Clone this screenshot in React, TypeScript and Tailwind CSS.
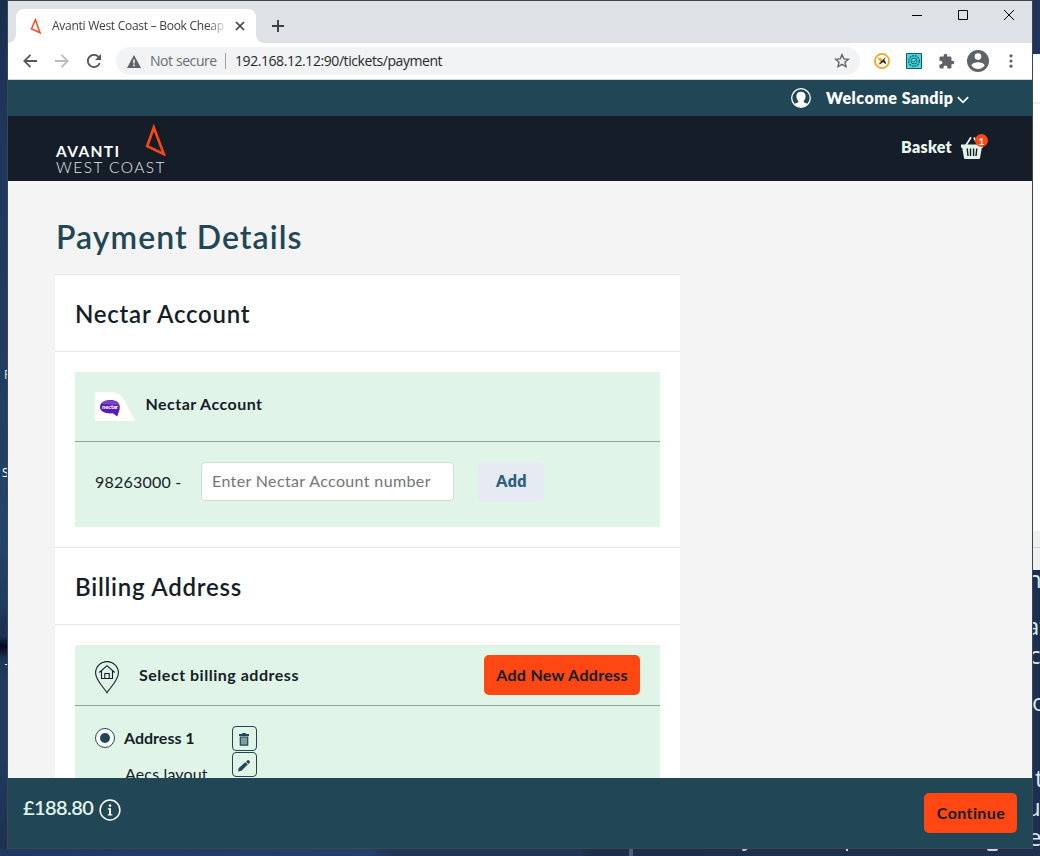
import React from "react";

const ui = "font-['Open_Sans','Noto_Sans',sans-serif]";

function TabStrip() {
  return (
    <div className="flex h-[42px] shrink-0 bg-[#dee1e6]">
      <svg className="h-2 w-2 shrink-0 self-end" viewBox="0 0 8 8"><path d="M8 0v8H0a8 8 0 0 0 8-8z" fill="#fff" /></svg>
      <div className="mt-2 flex h-[34px] w-60 shrink-0 items-center rounded-t-lg bg-white">
        <svg className="ml-[14px] h-4 w-[13px] shrink-0" viewBox="0 0 13 16" fill="none" stroke="#f9502c" strokeWidth="1.6">
          <path d="M5.4 1.8 1.5 10.8 10 14.8z" />
        </svg>
        <span className="ml-[9px] w-[174px] overflow-hidden whitespace-nowrap text-xs tracking-[-0.27px] text-[#3c4043] [mask-image:linear-gradient(to_right,#000_155px,transparent_176px)]">
          Avanti West Coast – Book Cheap
        </span>
        <svg className="ml-[9px] h-[10px] w-[10px]" viewBox="0 0 10 10" stroke="#3c4043" strokeWidth="1.7"><path d="M1 1l8 8M9 1l-8 8" /></svg>
      </div>
      <svg className="h-2 w-2 shrink-0 self-end" viewBox="0 0 8 8"><path d="M0 0v8h8a8 8 0 0 1-8-8z" fill="#fff" /></svg>
      <svg className="ml-2 mt-[19px] h-3 w-3" viewBox="0 0 12 12" stroke="#3c4043" strokeWidth="1.9"><path d="M6 0v12M0 6h12" /></svg>
      <div className="ml-auto mr-[18px] mt-[9px] flex h-[11px] gap-9">
        <svg className="h-[11px] w-[10px]" viewBox="0 0 10 11" stroke="#000"><path d="M0 5.5h10" /></svg>
        <svg className="h-[10px] w-[10px]" viewBox="0 0 10 10" fill="none" stroke="#000"><path d="M.5.5h9v9h-9z" /></svg>
        <svg className="h-[10px] w-[10px]" viewBox="0 0 10 10" stroke="#000"><path d="M0 0l10 10M10 0L0 10" /></svg>
      </div>
    </div>
  );
}

function Slot({ children }: { children: React.ReactNode }) {
  return <div className="flex h-8 w-8 shrink-0 items-center justify-center">{children}</div>;
}

function Toolbar() {
  return (
    <div className="flex h-[37px] shrink-0 items-center border-b border-[#d3d6d9] bg-white pl-1.5">
      <Slot>
        <svg className="h-[14px] w-[14px]" viewBox="0 0 14 14" fill="none" stroke="#54585d" strokeWidth="1.8"><path d="M14 7H1.5M7.5.8 1.3 7l6.2 6.2" /></svg>
      </Slot>
      <Slot>
        <svg className="h-[14px] w-[14px]" viewBox="0 0 14 14" fill="none" stroke="#babcbe" strokeWidth="1.8"><path d="M0 7h12.5M6.5.8 12.7 7l-6.2 6.2" /></svg>
      </Slot>
      <Slot>
        <svg className="h-[14px] w-[14px]" viewBox="0 0 14 14" fill="none" stroke="#54585d" strokeWidth="1.9"><path d="M12.7 9A6.1 6.1 0 1 1 11.6 3" /><path d="M14 0v6H8z" fill="#54585d" stroke="none" /></svg>
      </Slot>
      <div className="ml-1.5 flex h-7 w-[744px] items-center rounded-full bg-[#f1f3f4] pl-[11px] pr-[10px] text-sm">
        <svg className="h-[13px] w-[14px]" viewBox="0 0 14 13"><path d="M7 0l7 13H0z" fill="#5f6368" /><path d="M6.2 4.5h1.6v4H6.2zM6.2 9.6h1.6v1.6H6.2z" fill="#f1f3f4" /></svg>
        <span className="ml-[9px] w-[67px] whitespace-nowrap tracking-[-0.42px] text-[#6a6e73]">Not secure</span>
        <span className="ml-2 h-4 w-px bg-[#9aa0a6]" />
        <span className="ml-[9px] whitespace-nowrap tracking-[-0.43px] text-[#27292d]">192.168.12.12:90/tickets/payment</span>
        <svg className="ml-auto h-4 w-4" viewBox="0 0 24 24" fill="none" stroke="#5f6368" strokeWidth="2"><path d="M12 2.5l2.7 6.3 6.9.6-5.2 4.5 1.6 6.7-6-3.6-6 3.6 1.6-6.7-5.2-4.5 6.9-.6z" /></svg>
      </div>
      <div className="ml-1.5 flex">
        <Slot>
          <svg className="h-4 w-4" viewBox="0 0 16 16"><circle cx="8" cy="8" r="7.1" fill="#fff" stroke="#f9a21b" strokeWidth="1.7" /><path d="M3.5 5h3.5L8.5 7l2.5-2-5.5 6.5-1.5-.3 2.3-2.7z" fill="#f7a11c" /><path d="M12 4 7.500 8 5.200 11.300l2.100-.8L9 9l3 2.600-.4-2.600L10.300 7z" fill="#222" /></svg>
        </Slot>
        <Slot>
          <svg className="h-4 w-4" viewBox="0 0 16 16" fill="none"><path d="M.5.5h15v15H.5z" fill="#45d9e3" stroke="#1c5661" /><circle cx="8" cy="8" r="5.3" stroke="#1b6672" strokeWidth="1.4" strokeDasharray="2 .8" /><circle cx="8" cy="8" r="3" stroke="#1b6672" /><path d="M6.3 8.2l1.2 1.1 2.3-2.5" stroke="#1b6672" /></svg>
        </Slot>
        <Slot>
          <svg className="h-[17px] w-[17px]" viewBox="0 0 24 24" fill="#5f6368"><path d="M20.5 11H19V7c0-1.1-.9-2-2-2h-4V3.5a2.5 2.5 0 0 0-5 0V5H4c-1.1 0-2 .9-2 2v3.8h1.5c1.5 0 2.7 1.2 2.7 2.7S5 16.2 3.5 16.2H2V20c0 1.1.9 2 2 2h3.8v-1.5c0-1.5 1.2-2.7 2.7-2.7s2.7 1.2 2.7 2.7V22H17c1.1 0 2-.9 2-2v-4h1.5a2.5 2.5 0 0 0 0-5z" /></svg>
        </Slot>
        <Slot>
          <svg className="h-[22px] w-[22px]" viewBox="0 0 22 22"><circle cx="11" cy="11" r="11" fill="#5f6368" /><circle cx="11" cy="6.6" r="3.3" fill="#fff" /><path d="M4.4 15.6c0-2.2 4.4-3.4 6.6-3.4s6.6 1.2 6.6 3.4A8 8 0 0 1 11 19a8 8 0 0 1-6.6-3.4z" fill="#fff" /></svg>
        </Slot>
        <Slot>
          <svg className="ml-px h-[14px] w-1" viewBox="0 0 4 14" fill="#5f6368"><circle cx="2" cy="1.8" r="1.6" /><circle cx="2" cy="7" r="1.6" /><circle cx="2" cy="12.2" r="1.6" /></svg>
        </Slot>
      </div>
    </div>
  );
}

function SiteHeader() {
  return (
    <>
      <div className="flex h-9 shrink-0 items-center justify-end bg-[#214655] pr-[63px] text-white">
        <svg className="h-5 w-5" viewBox="0 0 20 20"><circle cx="10" cy="10" r="9.3" fill="none" stroke="#fff" strokeWidth="1.3" /><path d="M10 3.7c-3 0-4.700 2-4.600 4.600 0 1.900.7 3.500 1.900 4.600.3 1.200-.4 1.700-3.700 2.900C5.400 17.900 7.500 19 10 19s4.600-1.100 6.400-3.200c-3.300-1.200-4-1.700-3.700-2.900 1.200-1.100 1.900-2.700 1.900-4.600 0-2.600-1.600-4.600-4.600-4.600z" fill="#fff" /></svg>
        <span className="ml-[15px] w-[129px] whitespace-nowrap text-base font-extrabold tracking-[0.5px]">Welcome Sandip</span>
        <svg className="ml-[2px] mt-1 h-2 w-3" viewBox="0 0 12 8" fill="none" stroke="#fff" strokeWidth="1.7"><path d="M.8 1.2 6 6.4l5.2-5.2" /></svg>
      </div>
      <div className="flex h-[65px] shrink-0 justify-between bg-[#151e28] pl-12 pr-12">
        <div className="pt-2">
          <div className="flex h-8 items-end">
            <span className="mb-[-5px] w-[89px] text-[15.5px] font-bold leading-5 tracking-[1.35px] text-white">AVANTI</span>
            <svg className="h-8 w-[22px]" viewBox="0 0 22 32" fill="none" stroke="#ff4713" strokeWidth="2.6"><path d="M8.8 3.5 2.2 22.2l16.600 7.900z" /></svg>
          </div>
          <div className="mt-px whitespace-nowrap text-[15.5px] font-light leading-5 tracking-[1.45px] text-[#e4e7ea]">WEST COAST</div>
        </div>
        <div className="flex pt-[19px]">
          <span className="w-[59px] whitespace-nowrap text-base font-extrabold leading-6 tracking-[0.3px] text-[#e8f7ee]">Basket</span>
          <div className="relative h-6 w-6">
            <svg className="mt-px h-[23px] w-6" viewBox="0 0 24 23"><path d="M1 8.5h22v3.3h-1.2L20 22c-.1.6-.5 1-1.2 1H5.2c-.7 0-1.1-.4-1.2-1L2.2 11.8H1z" fill="#e1f4e8" /><path d="M7.2 12.5l.8 7.5M10.5 12.5V20M13.6 12.5V20M16.8 12.5l-.8 7.5" stroke="#151e28" strokeWidth="1.4" /><path d="M5.8 9.5 11 1.2M14 1.5l2 4" stroke="#e1f4e8" strokeWidth="1.7" fill="none" /></svg>
            <span className="absolute left-[15px] top-[-1px] flex h-[13px] w-[13px] items-center justify-center rounded-full bg-[#ff4713] text-[10px] font-bold leading-none text-white">1</span>
          </div>
        </div>
      </div>
    </>
  );
}

function CardHeading({ children }: { children: React.ReactNode }) {
  return (
    <h2 className="flex h-[78px] items-center border-y border-[#e4e5e6] pl-5 pt-px text-2xl font-semibold tracking-[0.76px] text-[#151e28]">
      {children}
    </h2>
  );
}

function NectarPanel() {
  return (
    <div className="m-5 h-[155px] bg-[#e1f4e8]">
      <div className="flex h-[70px] items-start border-b border-[#8aa69e] px-5 pt-5">
        <div className="relative h-[29px] w-10">
          <svg className="h-[29px] w-10" viewBox="0 0 40 29"><path d="M0 0h15c8 0 12 4 15.5 10.5L40 29H0z" fill="#fff" /><path d="M15 8c6 0 9.800 2.600 9.800 7 0 3.500-1.500 5.500-2.500 9.500l-4.500-3.200c-7 .6-12.800-1.600-12.800-6C5 11 9 8 15 8z" fill="#5c1ab2" /><path d="M6 12c2-3 6-3.600 9-3.600S23 9.500 24.300 13z" fill="#8c62ca" opacity=".6" /></svg>
          <span className="absolute left-[7px] top-[11px] text-[6px] font-black leading-[7px] tracking-[-0.2px] text-white">nectar</span>
        </div>
        <span className="ml-[10.5px] text-base font-bold leading-6 tracking-[0.46px] text-[#151e28]">Nectar Account</span>
      </div>
      <div className="flex px-5 pt-5">
        <span className="w-[106px] text-base leading-10 tracking-[0.22px] text-[#151e28]">98263000 -</span>
        <input
          className="h-[39px] w-[253px] rounded border border-[#d3dae4] bg-white px-[10px] pb-0.5 text-base tracking-[0.37px] text-[#151e28] placeholder:text-[#757575]"
          placeholder="Enter Nectar Account number"
        />
        <button className="ml-6 h-10 w-[66px] rounded-[5px] bg-[#e5eaf3] pb-0.5 pl-px text-base font-extrabold tracking-[0.4px] text-[#2d5f7d]">Add</button>
      </div>
    </div>
  );
}

function BillingPanel() {
  return (
    <div className="m-5 h-[200px] bg-[#e1f4e8]">
      <div className="flex h-[61px] items-center border-b border-[#8aa69e] px-5">
        <svg className="mt-1 h-[33px] w-6" viewBox="0 0 24 33" fill="none" stroke="#151e28" strokeWidth="1.1"><path d="M12 31.7C8 25.5.6 19 .6 12a11.4 11.4 0 0 1 22.8 0c0 7-7.4 13.5-11.4 19.7z" /><path d="M4.3 11.5 12 4.7l7.7 6.8M6.5 10v7.5h11V10M9.8 17.5v-5h4.4v5" /></svg>
        <span className="ml-5 text-base font-bold tracking-[0.52px] text-[#151e28]">Select billing address</span>
        <button className="ml-auto h-10 w-[156px] rounded-[5px] bg-[#ff4713] text-base font-bold tracking-[0.32px] text-[#151e28]">Add New Address</button>
      </div>
      <div className="flex px-5 pt-5">
        <div className="mt-0.5 flex h-5 w-5 items-center justify-center rounded-full border border-[#214655] bg-white">
          <span className="h-[10px] w-[10px] rounded-full bg-[#214655]" />
        </div>
        <div className="ml-[9px] w-[108px] text-[#151e28]">
          <div className="text-base font-bold leading-6">Address 1</div>
          <div className="mt-3 pl-px text-base leading-6 tracking-[0.15px]">Aecs layout</div>
        </div>
        <div className="flex flex-col gap-px">
          <button className="flex h-[25px] w-[25px] items-center justify-center rounded border border-[#214655]">
            <svg className="mr-px mt-px h-[13px] w-[10px]" viewBox="0 0 10 13"><path d="M0 1h3l.6-1h2.8L7 1h3v2H0z" fill="#214655" /><path d="M1.3 4h7.4v8.2H1.3z" fill="#7f9c9e" stroke="#214655" strokeWidth="1.2" /></svg>
          </button>
          <button className="flex h-[25px] w-[25px] items-center justify-center rounded border border-[#214655]">
            <svg className="mr-px mt-0.5 h-3 w-3" viewBox="0 0 12 12" fill="#214655"><path d="M0 11.5l.8-3.5 6.5-5.8 2.500 2.400-6.400 6.100zM8 1.700 9.400.4c.5-.5 1.100-.5 1.500 0l.8.9c.4.4.4 1-.1 1.400l-1.300 1.300z" /></svg>
          </button>
        </div>
      </div>
    </div>
  );
}

function ActionBar() {
  return (
    <div className="flex h-[70px] shrink-0 items-start bg-[#214655] pl-[15px] pr-[15px] pt-[15px]">
      <span className="w-[72px] whitespace-nowrap text-xl font-semibold leading-7 tracking-[-0.6px] text-[#e1f4e8]">£188.80</span>
      <svg className="ml-[3.5px] mt-[6px] h-[22px] w-[22px]" viewBox="0 0 22 22"><circle cx="11" cy="11" r="9.9" fill="none" stroke="#fff" strokeWidth="1.5" /><circle cx="11" cy="6.6" r="1.3" fill="#fff" /><path d="M8.8 9.2h3.2v6h1.3v1.3H8.800v-1.300h1.300v-4.700H8.800z" fill="#fff" /></svg>
      <button className="ml-auto h-10 w-[93px] rounded-[5px] bg-[#ff4713] pl-px text-base font-bold tracking-[0.4px] text-[#151e28]">Continue</button>
    </div>
  );
}

function RightDesktop() {
  return (
    <div className={`flex w-[7px] flex-col overflow-hidden bg-[#1b3050] text-2xl leading-6 text-[#dce8f3] ${ui}`}>
      <div className="h-[54px] shrink-0 bg-[#20355d]" />
      <div className="h-[50px] shrink-0 border-b-2 border-[#ededed] bg-white" />
      <div className="h-[427px] shrink-0 bg-white" />
      <div className="h-[17px] shrink-0 border-b border-[#cfcfcf] bg-[#f0f0f0]" />
      <div className="h-[22px] shrink-0 bg-[#f0f0f0]" />
      <div className="-ml-[6px] flex h-[18px] shrink-0 items-center">n</div>
      <div className="-ml-[7px] mt-[26px] flex h-6 shrink-0 items-center">at</div>
      <div className="-ml-[4px] mt-[5px] flex h-6 shrink-0 items-center">c</div>
      <div className="-ml-[1px] mt-[23px] flex h-6 shrink-0 items-center">o</div>
      <div className="ml-[2px] mt-[52px] flex h-6 shrink-0 items-center">t</div>
      <div className="-ml-[7px] mt-[5px] flex h-6 shrink-0 items-center">u</div>
      <div className="-ml-[5px] mt-[6px] flex h-6 shrink-0 items-center">e</div>
    </div>
  );
}

export default function App() {
  return (
    <div className="flex h-[856px] w-[1040px] flex-col overflow-hidden bg-[#1d3050]">
      <div className="flex h-[849px] shrink-0">
        <div className={`flex w-[7px] flex-col overflow-hidden bg-[linear-gradient(#1b2e4e_0,#20375f_150px,#203b60_350px,#22466a_540px,#1f3b60_605px,#1c3252_620px,#1c3252_636px,#05071c_646px,#1c3355_658px,#203a60_680px,#203a60_760px,#1e3150_849px)] text-xs text-white ${ui}`}>
          <div className="ml-[4px] mt-[367px] h-4 leading-4 text-[#d4f0d8]">P</div>
          <div className="ml-[2px] mt-[82px] h-4 leading-4">S</div>
          <div className="ml-[5px] mt-[180px] h-4 leading-4">T</div>
        </div>
        <div className="flex w-[1026px] flex-col border border-[#40464c]">
          <div className={`flex flex-col ${ui}`}>
            <TabStrip />
            <Toolbar />
          </div>
          <div className="flex min-h-0 flex-1 flex-col font-['Lato',sans-serif]">
            <SiteHeader />
            <main className="min-h-0 flex-1 overflow-hidden bg-[#f4f4f4] pl-[47px] pt-[36px]">
              <h1 className="pl-px text-[32px] font-semibold leading-10 tracking-[1.05px] text-[#214655]">Payment Details</h1>
              <section className="mt-[17px] w-[625px] bg-white">
                <CardHeading>Nectar Account</CardHeading>
                <div className="flow-root"><NectarPanel /></div>
                <CardHeading>Billing Address</CardHeading>
                <div className="flow-root"><BillingPanel /></div>
              </section>
            </main>
            <ActionBar />
          </div>
        </div>
        <RightDesktop />
      </div>
      <div className="flex h-[7px] items-start bg-[linear-gradient(to_right,#203963_0,#21406a_370px,#203656_390px,#203656_580px,#1b2e4b_590px,#1d3050_100%)]">
        <span className="ml-[629px] h-[7px] w-1 bg-[#4b5f7c]" />
        <span className="ml-[109px] h-[2px] w-[5px] -skew-x-[30deg] rounded-b bg-[#b9c6d4]" />
        <span className="ml-[99px] h-[2px] w-[2px] bg-[#c9d4df]" />
        <span className="ml-[139px] h-[2px] w-[11px] rounded-b-full bg-[#c9d4df]" />
      </div>
    </div>
  );
}
